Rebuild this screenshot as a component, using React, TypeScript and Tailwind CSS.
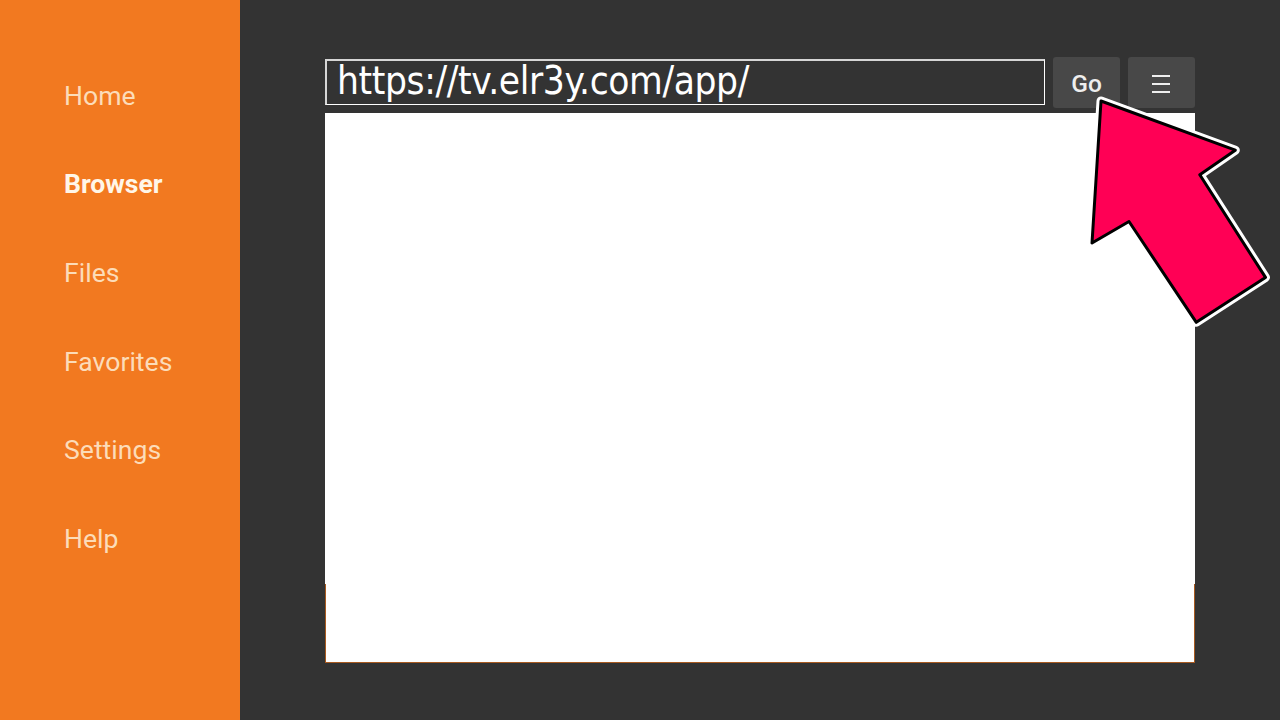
import React from 'react'

const menuItems = [
    { id: 'home', label: 'Home' },
    { id: 'browser', label: 'Browser' },
    { id: 'files', label: 'Files' },
    { id: 'favorites', label: 'Favorites' },
    { id: 'settings', label: 'Settings' },
    { id: 'help', label: 'Help' },
]

const arrowPoints = '1101,101 1235.3,150.2 1199.8,174.8 1265.5,277.4 1196.3,322.3 1129,221.5 1092,243'

function Sidebar({ active }: { active: string }) {
    return (
        <nav className="h-full w-60 shrink-0 bg-[#f27920] pl-16 pt-[51.4px] font-['Roboto',sans-serif] text-[26.6px]">
            <ul>
                {menuItems.map((item) => (
                    <li
                        key={item.id}
                        className={
                            item.id === active
                                ? 'flex h-[88.67px] items-center font-bold text-[#fff6e8]'
                                : 'flex h-[88.67px] items-center text-[#fcdcb9]'
                        }
                    >
                        {item.label}
                    </li>
                ))}
            </ul>
        </nav>
    )
}

function Arrow() {
    return (
        <svg className="pointer-events-none absolute inset-0" width="1280" height="720" viewBox="0 0 1280 720">
            <polygon points={arrowPoints} fill="#fff" stroke="#fff" strokeWidth="9" strokeLinejoin="round" />
            <polygon points={arrowPoints} fill="#ff0055" stroke="#000" strokeWidth="3" strokeLinejoin="round" />
        </svg>
    )
}

export default function App() {
    return (
        <div className="relative flex h-[720px] w-[1280px] overflow-hidden bg-[#333333]">
            <Sidebar active="browser" />
            <main className="flex flex-1 flex-col pl-[85px] pr-[85px] pt-[57px]">
                <div className="flex h-[51px] items-start gap-2">
                    <div className="mt-0.5 flex h-[46px] w-[720px] items-center border border-t-2 border-l-2 border-white border-t-[#d6d6d6] border-l-[#d6d6d6] pb-0.5 pl-2.5">
                        <span className="whitespace-nowrap font-['DejaVu_Sans_Condensed','DejaVu_Sans',sans-serif] text-[38.5px] leading-none tracking-[-0.4px] text-white">
                            https://tv.elr3y.com/app/
                        </span>
                    </div>
                    <button className="flex h-[51px] w-[67px] items-center justify-center rounded-[3px] bg-[#484848] pt-[3px] font-['Roboto',sans-serif] text-[24.5px] font-medium text-[#eeeeee]">
                        Go
                    </button>
                    <button className="flex h-[51px] w-[67px] items-center justify-center rounded-[3px] bg-[#484848] pt-0.5 pr-px" aria-label="Menu">
                        <svg width="18" height="18" viewBox="0 0 18 18" fill="#eeeeee">
                            <rect y="0" width="18" height="2" />
                            <rect y="8" width="18" height="2" />
                            <rect y="16" width="18" height="2" />
                        </svg>
                    </button>
                </div>
                <div className="mt-[5px] flex h-[550px] w-[870px] flex-col">
                    <div className="h-[471px] bg-white" />
                    <div className="flex-1 border border-t-0 border-[#a85a20] bg-white" />
                </div>
            </main>
            <Arrow />
        </div>
    )
}
